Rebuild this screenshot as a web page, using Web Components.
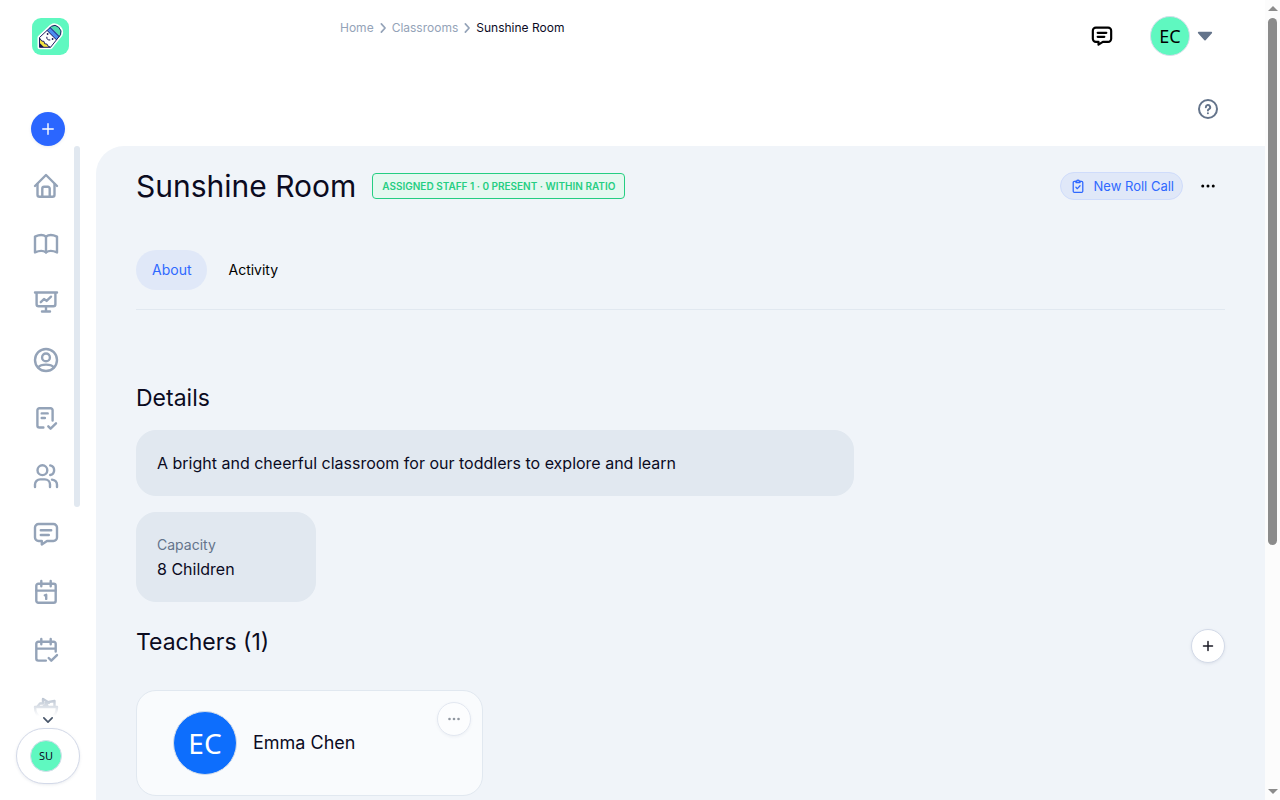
<!DOCTYPE html>
<html lang="en">
<head>
<meta charset="utf-8">
<meta name="viewport" content="width=device-width, initial-scale=1">
<title>Sunshine Room</title>
<style>
    :root {
        --ink: #0b0b1f;
        --muted: #64748b;
        --soft: #94a3b8;
        --blue: #2f68ff;
        --panel: #f0f4f9;
        --card: #e1e8f0;
        --mint: #5ff8c0;
    }
    body {
        margin: 0;
        font-family: Inter, "Open Sans", sans-serif;
        font-size: 16px;
        line-height: 24px;
        color: var(--ink);
        background: #fff;
    }
</style>
</head>
<body>
<app-shell>
    <side-bar slot="side">
        <nav-item icon="home" label="Home"></nav-item>
        <nav-item icon="book" label="Curriculum"></nav-item>
        <nav-item icon="board" label="Reports"></nav-item>
        <nav-item icon="profile" label="Profile"></nav-item>
        <nav-item icon="form" label="Forms"></nav-item>
        <nav-item icon="users" label="Families"></nav-item>
        <nav-item icon="chat" label="Messages"></nav-item>
        <nav-item icon="calendar" label="Calendar"></nav-item>
        <nav-item icon="schedule" label="Schedule"></nav-item>
        <nav-item icon="meals" label="Meals"></nav-item>
    </side-bar>
    <top-bar slot="top">
        <bread-crumbs>
            <crumb-link href="#home">Home</crumb-link>
            <crumb-link href="#classrooms">Classrooms</crumb-link>
            <crumb-link current>Sunshine Room</crumb-link>
        </bread-crumbs>
    </top-bar>
    <room-header>
        Sunshine Room
        <status-badge slot="status">ASSIGNED STAFF 1 · 0 PRESENT · WITHIN RATIO</status-badge>
        <pill-button slot="actions" icon="clipboard">New Roll Call</pill-button>
        <round-button slot="actions" icon="dots" label="More" plain></round-button>
    </room-header>
    <tab-bar>
        <tab-item selected>About</tab-item>
        <tab-item>Activity</tab-item>
    </tab-bar>
    <page-section>
        <span slot="title">Details</span>
        <detail-card wide>A bright and cheerful classroom for our toddlers to explore and learn</detail-card>
        <detail-card label="Capacity">8 Children</detail-card>
    </page-section>
    <page-section roomy>
        <span slot="title">Teachers (1)</span>
        <round-button slot="action" icon="plus" label="Add teacher"></round-button>
        <teacher-card initials="EC">Emma Chen</teacher-card>
    </page-section>
</app-shell>

<script>
const ICONS = {
    home: '<path d="M1 12 12 1l11 11"/><path d="M3.5 10v10.8a2 2 0 0 0 2 2h13a2 2 0 0 0 2-2V10"/><path d="M8.3 22.5v-8a1.8 1.8 0 0 1 1.8-1.8h3.8a1.8 1.8 0 0 1 1.8 1.8v8"/>',
    book: '<path d="M12 4.6C9.6 2.8 5 2.8 1 4.6v15.8c4-1.8 8.6-1.8 11 0 2.4-1.8 7-1.8 11 0V4.6c-4-1.8-8.6-1.8-11 0z"/><path d="M12 4.6v15.8"/>',
    board: '<path d="M1 2.5h22M2.6 2.5v11.8a2 2 0 0 0 2 2h14.8a2 2 0 0 0 2-2V2.5M12 16.3v5.2M8 21.5h8"/><path d="m6.8 12.2 3.2-3.2 2.6 1.9 4.4-4.2"/>',
    profile: '<circle cx="12" cy="12" r="11"/><circle cx="12" cy="9.4" r="3.9"/><path d="M4.2 19.4c1.6-2 4.1-2.8 7.8-2.8s6.2.8 7.8 2.8"/>',
    form: '<path d="M18.6 14.6V4.2a2 2 0 0 0-2-2H5.4a2 2 0 0 0-2 2v15.3a2 2 0 0 0 2 2h4M7.7 7.4h6M7.7 12h3.2"/><path d="m14.3 20.3 2.3 2.4 5.4-5.4"/>',
    users: '<circle cx="8.4" cy="6.2" r="4.9"/><path d="M1 23v-2.4a5.2 5.2 0 0 1 5.2-5.2h4.6a5.2 5.2 0 0 1 5.2 5.2V23"/><path d="M16.2 1.4a4.9 4.9 0 0 1 0 9.6M18 15.6c3 .4 5 2.3 5 5.2V23"/>',
    chat: '<path d="M4.6 2h14.8A3.6 3.6 0 0 1 23 5.6v9.8a3.6 3.6 0 0 1-3.6 3.6H13l-5.2 3.4V19H4.6A3.6 3.6 0 0 1 1 15.4V5.6A3.6 3.6 0 0 1 4.6 2zM6.8 8.2h10.4M6.8 13h8"/>',
    calendar: '<rect x="2.3" y="3.8" width="19.4" height="19" rx="2"/><path d="M2.3 10.6h19.4M7.3.9v5.4M16.7.9v5.4M10.8 15.3l1.4-.5v4.1"/>',
    schedule: '<path d="M21.7 13.6V5.8a2 2 0 0 0-2-2H4.3a2 2 0 0 0-2 2v14.8a2 2 0 0 0 2 2h7.6M2.3 10.6h19.4M7.3.9v5.4M16.7.9v5.4"/><path d="m14.7 20 2.6 2.7 5.7-5.6"/>',
    meals: '<path d="M1 11h22c0 6-3.6 10-7 11.5H8C4.6 21 1 17 1 11z"/><path d="M3.5 10.5 6 7.5h3V3l6 3.8M9.5 10.5 15 6l5.5-1v5.5M11.5 7l2 3"/>',
    clipboard: '<path d="M8 4H5.8a2 2 0 0 0-2 2v15a2 2 0 0 0 2 2h12.4a2 2 0 0 0 2-2V6a2 2 0 0 0-2-2H16"/><path d="M8.5 3.500h1.300a2.300 2.300 0 0 1 4.400 0h1.300v2.500h-7zM8.500 14.200l2.400 2.400 4.600-5"/>',
    plus: '<path d="M12 3v18M3 12h18"/>',
    dots: '<g fill="currentColor" stroke="none"><circle cx="3" cy="12" r="2.600"/><circle cx="12" cy="12" r="2.600"/><circle cx="21" cy="12" r="2.600"/></g>',
    help: '<circle cx="12" cy="12" r="10.8"/><path d="M9.4 9.8a2.6 2.6 0 1 1 3.8 2.4c-.9.5-1.3.9-1.3 1.6M11.9 17v.2"/>',
    right: '<path d="m8 2 9 10-9 10"/>',
    down: '<path d="m2 7 10 10L22 7"/>',
    caret: '<path d="M2.5 7h19L12 17.5z" fill="currentColor"/>'
};

function define(name, css, html, setup) {
    const template = document.createElement('template');
    template.innerHTML = `<style>:host { display: block; } * { box-sizing: border-box; } button { font: inherit; cursor: pointer; }${css}</style>${html}`;

    customElements.define(name, class extends HTMLElement {
        constructor() {
            super();
            this.attachShadow({ mode: 'open' }).append(template.content.cloneNode(true));
        }

        connectedCallback() {
            if (setup) setup(this, this.shadowRoot);
        }
    });
}

// app-icon reads its name once, so it is swapped in after the name is known
function setIcon(root, name) {
    const icon = document.createElement('app-icon');
    icon.setAttribute('name', name);
    root.querySelector('app-icon').replaceWith(icon);
}

define('app-icon', `
    :host { width: var(--icon-size, 24px); height: var(--icon-size, 24px); flex: none; }
    svg { display: block; width: 100%; height: 100%; overflow: visible; fill: none; stroke: currentColor;
          stroke-width: var(--icon-stroke, 2.4); stroke-linecap: round; stroke-linejoin: round; }
`, '<svg viewBox="0 0 24 24" aria-hidden="true"></svg>', (host, root) => {
    root.querySelector('svg').innerHTML = ICONS[host.getAttribute('name')] || '';
});

define('app-logo', `
    :host { width: 37px; height: 37px; }
    svg { display: block; }
`, `
    <svg viewBox="0 0 37 37" width="37" height="37" role="img" aria-label="Home">
        <rect width="37" height="37" rx="9" fill="#5ff8c0"/>
        <path d="M7.5 29.3V19.5L19.5 8.3q3.5-2.5 7.2 1t1.8 7.5L18.5 29.3z" fill="#fff" stroke="#fff" stroke-width="4" stroke-linejoin="round"/>
        <path d="M16.2 11.2 19.5 8.3q3.5-2.5 7.2 1t1.8 7.5l-2.8 3.6z" fill="#4fdcae"/>
        <path d="m15 12.4 3.6-3.5 9 9-3.1 4z" fill="#4d8df0"/>
        <path d="M7.5 29.3V19.5l2.2 3.5 2.3.4.6 2.3 2.5.5 1 2 2.4 1.1z" fill="#f4e23f"/>
        <path d="M7.5 24.8l4.5 4.5H7.5z" fill="#15144b"/>
        <path d="M7.5 29.3V19.5L19.5 8.3q3.5-2.5 7.2 1t1.8 7.5L18.5 29.3zM15 12.4l9.5 9.5M18 9.5l9.2 9.2M7.7 20.2l2 2.8 2.3.4.6 2.3 2.5.5 1 2 2.4 1" fill="none" stroke="#1c1b5e"/>
        <g fill="#15144b"><circle cx="15.6" cy="16" r=".9"/><circle cx="20.6" cy="21" r=".9"/></g>
        <path d="M14.8 18.8q-.3 3.5 3.5 3.2" fill="none" stroke="#15144b"/>
    </svg>
`);

define('user-avatar', `
    :host { width: var(--avatar, 40px); height: var(--avatar, 40px); flex: none; }
    span { display: grid; place-items: center; height: 100%; border: 1px solid #d5deea; border-radius: 50%;
           background: var(--avatar-color, var(--mint)); font-family: "Noto Sans", sans-serif; }
`, '<span><slot></slot></span>');

define('round-button', `
    :host { flex: none; }
    button { display: grid; place-items: center; width: 34px; height: 34px; padding: 0; border: 1px solid #d3dae8;
             border-radius: 50%; background: #fff; color: #1b1b26; box-shadow: 0 1px 3px #64748b22; --icon-size: 12px; --icon-stroke: 3; }
    :host([plain]) button { border: 0; background: none; box-shadow: none; color: #000; --icon-size: 14px; }
    :host([primary]) button { border: 0; background: #2b66ff; color: #fff; --icon-size: 14px; --icon-stroke: 2.4; }
    :host([icon="help"]) button { color: var(--muted); --icon-size: 20px; --icon-stroke: 2.4; }
    :host([faded]) button { color: #4b5563; opacity: .6; }
`, '<button type="button"><app-icon></app-icon></button>', (host, root) => {
    setIcon(root, host.getAttribute('icon'));
    root.querySelector('button').setAttribute('aria-label', host.getAttribute('label'));
});

define('nav-item', `
    a { display: grid; place-items: center; height: 58px; color: var(--soft); }
`, '<a href="#"><app-icon></app-icon></a>', (host, root) => {
    setIcon(root, host.getAttribute('icon'));
    root.querySelector('a').setAttribute('aria-label', host.getAttribute('label'));
});

define('side-bar', `
    :host { display: flex; flex-direction: column; height: 100%; }
    .brand { height: 112px; padding: 18px 0 0 32px; }
    .add { display: flex; justify-content: center; }
    .scroll { position: relative; display: flex; flex: 1; min-height: 0; margin-right: 16px; }
    nav { flex: 1; padding: 11px 0 0 18px; overflow: hidden;
          -webkit-mask-image: linear-gradient(#000 calc(100% - 40px), transparent calc(100% - 12px));
          mask-image: linear-gradient(#000 calc(100% - 40px), transparent calc(100% - 12px)); }
    .thumb { width: 6px; height: 62%; border-radius: 3px; background: #e1e8f0; }
    .more { position: absolute; bottom: 3px; left: 50%; margin-left: 3px; padding: 0; border: 0; background: none;
            color: #475569; --icon-size: 10px; --icon-stroke: 4; }
    .user { display: grid; place-items: center; height: 56px; margin: 0 16px 16px; padding: 0 4px 0 0; border: 1px solid #d3d9e8;
            border-radius: 32px; background: #fff; box-shadow: 0 1px 3px #64748b22; font-size: 11px; color: var(--ink);
            --avatar: 32px; }
`, `
    <div class="brand"><app-logo></app-logo></div>
    <div class="add"><round-button icon="plus" label="Create" primary></round-button></div>
    <div class="scroll">
        <nav><slot></slot></nav>
        <div class="thumb"></div>
        <button class="more" type="button" aria-label="Scroll down"><app-icon name="down"></app-icon></button>
    </div>
    <button class="user" type="button"><user-avatar>SU</user-avatar></button>
`);

define('crumb-link', `
    :host { display: flex; align-items: center; gap: 4px; }
    a { color: var(--soft); text-decoration: none; }
    app-icon { color: var(--soft); --icon-size: 10px; --icon-stroke: 4; }
    :host([current]) a { color: var(--ink); }
    :host([current]) app-icon { display: none; }
`, '<a><slot></slot></a><app-icon name="right"></app-icon>', (host, root) => {
    root.querySelector('a').href = host.getAttribute('href') || '#';
});

define('bread-crumbs', `
    nav { display: flex; gap: 4px; font-size: 12px; line-height: 16px; }
`, '<nav aria-label="Breadcrumb"><slot></slot></nav>');

define('top-bar', `
    .row { display: flex; justify-content: space-between; height: 72px; padding-right: 52px; }
    .crumbs { padding: 20px 0 0 244px; }
    .tools { display: flex; align-items: center; gap: 38px; }
    button { display: flex; align-items: center; gap: 7px; padding: 0; border: 0; background: none; color: #000; font-size: 18px; }
    .chat { --icon-size: 20px; --icon-stroke: 2.6; }
    .account app-icon { color: var(--muted); --icon-size: 16px; }
    .help { display: flex; align-items: center; justify-content: flex-end; height: 74px; padding-right: 40px; }
`, `
    <div class="row">
        <div class="crumbs"><slot></slot></div>
        <div class="tools">
            <button class="chat" type="button" aria-label="Messages"><app-icon name="chat"></app-icon></button>
            <button class="account" type="button"><user-avatar>EC</user-avatar><app-icon name="caret"></app-icon></button>
        </div>
    </div>
    <div class="help"><round-button icon="help" label="Help" plain></round-button></div>
`);

define('status-badge', `
    span { display: block; padding: 0 9px; border: 1px solid #25ce82; border-radius: 4px; background: #e5f8f0;
           color: #25ce82; font-size: 10px; font-weight: 600; line-height: 24px; white-space: nowrap; }
`, '<span><slot></slot></span>');

define('pill-button', `
    button { display: flex; align-items: center; gap: 9px; height: 28px; padding: 0 8px 0 10px; border: 1px solid #cfdcfb;
             border-radius: 14px; background: #e0e8f8; color: var(--blue); font-size: 13px; white-space: nowrap;
             --icon-size: 14px; --icon-stroke: 2.2; }
`, '<button type="button"><app-icon></app-icon><slot></slot></button>', (host, root) => {
    setIcon(root, host.getAttribute('icon'));
});

define('room-header', `
    :host { display: flex; align-items: center; gap: 16px; }
    h1 { margin: 0; font-size: 30px; font-weight: 400; line-height: 40px; }
    .actions { display: flex; align-items: center; gap: 8px; margin-left: auto; }
`, '<h1><slot></slot></h1><slot name="status"></slot><div class="actions"><slot name="actions"></slot></div>');

define('tab-item', `
    button { height: 40px; padding: 0 16px; border: 0; border-radius: 20px; background: none; color: #000; font-size: 14px; }
    :host([selected]) button { background: #e0e8f8; color: var(--blue); }
`, '<button type="button" role="tab"><slot></slot></button>', (host, root) => {
    root.querySelector('button').setAttribute('aria-selected', host.hasAttribute('selected'));
});

define('tab-bar', `
    div { display: flex; gap: 5px; margin-top: 44px; padding-bottom: 19px; border-bottom: 1px solid #e1e8f0; }
`, '<div role="tablist"><slot></slot></div>');

define('page-section', `
    section { margin-top: 72px; }
    header { display: flex; justify-content: space-between; margin-bottom: 16px; }
    h2 { margin: 0; font-size: 23px; font-weight: 400; line-height: 32px; }
    .body { display: grid; grid-template-columns: repeat(3, 1fr); gap: 16px 24px; }
    :host([roomy]) section { margin-top: 24px; }
    :host([roomy]) header { height: 40px; margin-bottom: 24px; }
    ::slotted([slot="action"]) { align-self: center; }
    ::slotted([wide]) { grid-column: span 2; }
    ::slotted(detail-card[label]) { grid-column: 1; justify-self: start; }
`, '<section><header><h2><slot name="title"></slot></h2><slot name="action"></slot></header><div class="body"><slot></slot></div></section>');

define('detail-card', `
    .card { min-width: 180px; padding: 20px; border: 1px solid var(--card); border-radius: 20px; background: var(--card); }
    .label { color: var(--muted); font-size: 14px; }
    .label:empty { display: none; }
`, '<div class="card"><div class="label"></div><slot></slot></div>', (host, root) => {
    root.querySelector('.label').textContent = host.getAttribute('label') || '';
});

define('teacher-card', `
    .card { position: relative; display: flex; align-items: center; gap: 16px; padding: 20px 36px; border: 1px solid #e1e8f0;
            border-radius: 20px; background: #f9fbfd; font-size: 18px; }
    user-avatar { --avatar: 64px; --avatar-color: #0d6efd; color: #fff; font-size: 28px; }
    round-button { position: absolute; top: 11px; right: 11px; }
`, '<div class="card"><user-avatar></user-avatar><slot></slot><round-button icon="dots" label="Teacher options" faded></round-button></div>', (host, root) => {
    root.querySelector('user-avatar').textContent = host.getAttribute('initials');
});

define('scroll-rail', `
    :host { display: flex; flex-direction: column; align-items: center; width: 15px; padding: 6px 0; box-sizing: border-box; background: #fcfcfc; color: #8b8b8b; }
    .track { flex: 1; width: 9px; margin: 7px 0; }
    .thumb { height: 69%; border-radius: 5px; background: #8b8b8b; }
    .up, .down { border: solid transparent; border-width: 0 5px; }
    .up { border-bottom: 5px solid; }
    .down { border-top: 5px solid; }
`, '<div class="up"></div><div class="track"><div class="thumb"></div></div><div class="down"></div>');

define('app-shell', `
    :host { display: grid; grid-template-columns: 96px minmax(0, 1fr) 15px; height: 100vh; overflow: hidden; }
    .side { min-height: 0; }
    .content { display: flex; flex-direction: column; min-height: 0; }
    main { flex: 1; min-height: 0; padding: 20px 40px 0; overflow: hidden; border-top-left-radius: 28px; background: var(--panel); }
`, `
    <div class="side"><slot name="side"></slot></div>
    <div class="content"><slot name="top"></slot><main><slot></slot></main></div>
    <scroll-rail></scroll-rail>
`);
</script>
</body>
</html>
